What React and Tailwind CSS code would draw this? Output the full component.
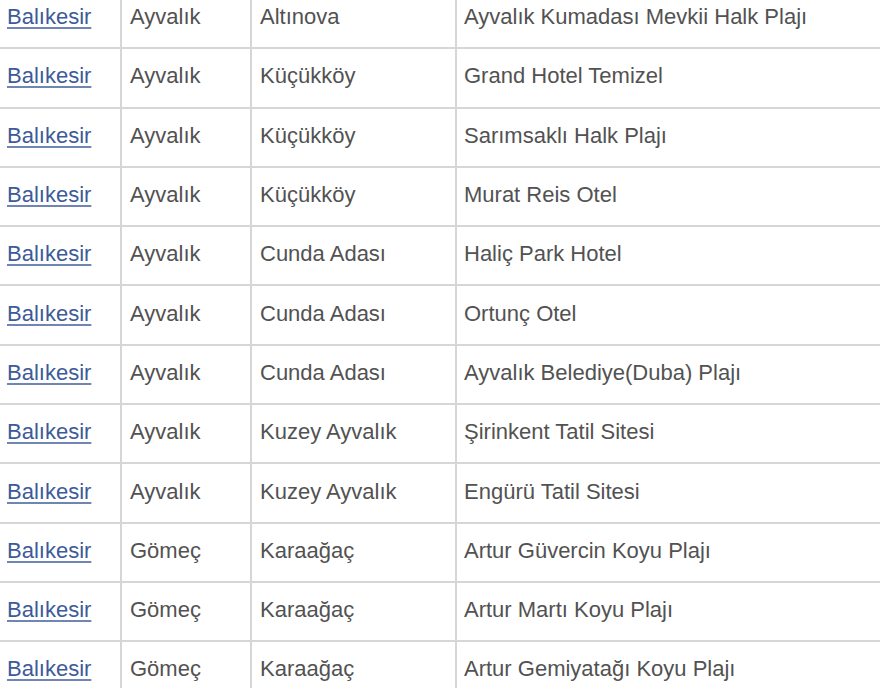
import React from "react";

const rows = [
  ["Ayvalık", "Altınova", "Ayvalık Kumadası Mevkii Halk Plajı"],
  ["Ayvalık", "Küçükköy", "Grand Hotel Temizel"],
  ["Ayvalık", "Küçükköy", "Sarımsaklı Halk Plajı"],
  ["Ayvalık", "Küçükköy", "Murat Reis Otel"],
  ["Ayvalık", "Cunda Adası", "Haliç Park Hotel"],
  ["Ayvalık", "Cunda Adası", "Ortunç Otel"],
  ["Ayvalık", "Cunda Adası", "Ayvalık Belediye(Duba) Plajı"],
  ["Ayvalık", "Kuzey Ayvalık", "Şirinkent Tatil Sitesi"],
  ["Ayvalık", "Kuzey Ayvalık", "Engürü Tatil Sitesi"],
  ["Gömeç", "Karaağaç", "Artur Güvercin Koyu Plajı"],
  ["Gömeç", "Karaağaç", "Artur Martı Koyu Plajı"],
  ["Gömeç", "Karaağaç", "Artur Gemiyatağı Koyu Plajı"],
];

export default function App() {
  return (
    <div className="w-[880px] h-[688px] overflow-hidden bg-white">
      <table
        className="-mt-[12px] -ml-[1px] w-[900px] table-fixed border-collapse text-[22px] leading-[26px] text-[#525252]"
        style={{ fontFamily: '"Liberation Sans", Arial, sans-serif' }}
      >
        <colgroup>
          <col className="w-[122px]" />
          <col className="w-[130px]" />
          <col className="w-[205px]" />
          <col />
        </colgroup>
        <tbody>
          {rows.map((r, i) => (
            <tr key={i} className="h-[59.3px]">
              <td className="border-2 border-[#d6d6d6] border-l-0 pl-[8px] pb-[3px] align-middle">
                <a href="#" className="text-[#3d5a99] underline decoration-[#6f86b5] underline-offset-[3px]">
                  Balıkesir
                </a>
              </td>
              <td className="border-2 border-[#d6d6d6] pl-[8px] pb-[3px] align-middle">{r[0]}</td>
              <td className="border-2 border-[#d6d6d6] pl-[8px] pb-[3px] align-middle">{r[1]}</td>
              <td className="border-2 border-[#d6d6d6] border-r-0 pl-[7px] pb-[3px] align-middle">{r[2]}</td>
            </tr>
          ))}
        </tbody>
      </table>
    </div>
  );
}
